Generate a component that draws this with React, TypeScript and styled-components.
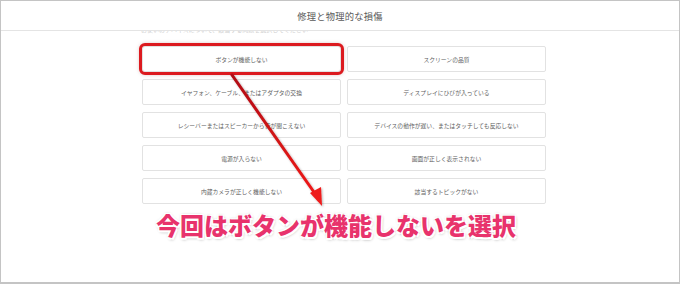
import styled, { createGlobalStyle } from "styled-components";

const GlobalStyle = createGlobalStyle`
    html, body {
        margin: 0;
        padding: 0;
        background: #ffffff;
    }
    body {
        font-family: "Noto Sans CJK JP", "Noto Sans", sans-serif;
    }
`;

const Frame = styled.main`
    position: relative;
    box-sizing: border-box;
    width: 680px;
    height: 284px;
    border: 1px solid #c4c4c4;
    border-bottom-width: 2px;
    background: #fff;
    overflow: hidden;
`;

const Header = styled.header`
    height: 29px;
    display: flex;
    align-items: center;
    justify-content: center;
    border-bottom: 1px solid #e4e4e4;
    font-size: 9.3px;
    color: #5a5a5a;
    letter-spacing: 0.2px;
`;

const CutLine = styled.div`
    height: 3px;
    overflow: hidden;
    padding-left: 140px;
    font-size: 6px;
    color: #cfcfcf;
    line-height: 6px;

    span {
        display: block;
        margin-top: -4px;
    }
`;

const Grid = styled.div`
    display: grid;
    grid-template-columns: 199px 199px;
    grid-auto-rows: 26px;
    column-gap: 6px;
    row-gap: 7px;
    margin: 12px 0 0 141px;
`;

const Option = styled.div<{ $highlight?: boolean }>`
    box-sizing: border-box;
    display: flex;
    align-items: center;
    justify-content: center;
    border: 1px solid #e2e2e2;
    font-size: 5.8px;
    color: #606060;
    white-space: nowrap;
    outline: ${(p) => (p.$highlight ? "3px solid #dc1a1f" : "none")};
    outline-offset: 0px;
    box-shadow: ${(p) => (p.$highlight ? "0 0 4px 2px rgba(120, 0, 0, 0.35)" : "none")};
    border-radius: ${(p) => (p.$highlight ? "3px" : "2px")};
`;

const Caption = styled.p`
    margin: 4px 0 0;
    padding-left: 155px;
    font-size: 24px;
    font-weight: 900;
    line-height: 34px;
    color: #e8336c;
    text-shadow:
        -1.5px -1.5px 0 #fff, 1.5px -1.5px 0 #fff, -1.5px 1.5px 0 #fff, 1.5px 1.5px 0 #fff,
        0 0 3px rgba(0, 0, 0, 0.35), 1px 2px 3px rgba(0, 0, 0, 0.3);
`;

const ArrowLayer = styled.svg`
    position: absolute;
    left: 0;
    top: 0;
    pointer-events: none;
`;

const options = [
    "ボタンが機能しない",
    "スクリーンの品質",
    "イヤフォン、ケーブル、またはアダプタの交換",
    "ディスプレイにひびが入っている",
    "レシーバーまたはスピーカーから音が聞こえない",
    "デバイスの動作が遅い、またはタッチしても反応しない",
    "電源が入らない",
    "画面が正しく表示されない",
    "内蔵カメラが正しく機能しない",
    "該当するトピックがない",
];

function Arrow() {
    return (
        <ArrowLayer width="680" height="284" viewBox="0 0 680 284">
            <defs>
                <linearGradient id="arrowGrad" x1="0" y1="0" x2="0" y2="1">
                    <stop offset="0" stopColor="#b00d12" />
                    <stop offset="1" stopColor="#f01a1a" />
                </linearGradient>
                <filter id="arrowShadow" x="-20%" y="-20%" width="140%" height="140%">
                    <feDropShadow dx="1" dy="1" stdDeviation="1" floodColor="#000" floodOpacity="0.3" />
                </filter>
            </defs>
            <g filter="url(#arrowShadow)">
                <line x1="231" y1="74" x2="315" y2="194" stroke="url(#arrowGrad)" strokeWidth="3" strokeLinecap="round" />
                <polygon points="321,205 309,192 320,186" fill="#ee1a1a" />
            </g>
        </ArrowLayer>
    );
}

function App() {
    return (
        <>
            <GlobalStyle />
            <Frame>
                <Header>修理と物理的な損傷</Header>
                <CutLine>
                    <span>お使いのデバイスについて、該当する問題を選択してください</span>
                </CutLine>
                <Grid>
                    {options.map((o, i) => (
                        <Option key={o} $highlight={i === 0}>{o}</Option>
                    ))}
                </Grid>
                <Caption>今回はボタンが機能しないを選択</Caption>
                <Arrow />
            </Frame>
        </>
    );
}

export default App;
